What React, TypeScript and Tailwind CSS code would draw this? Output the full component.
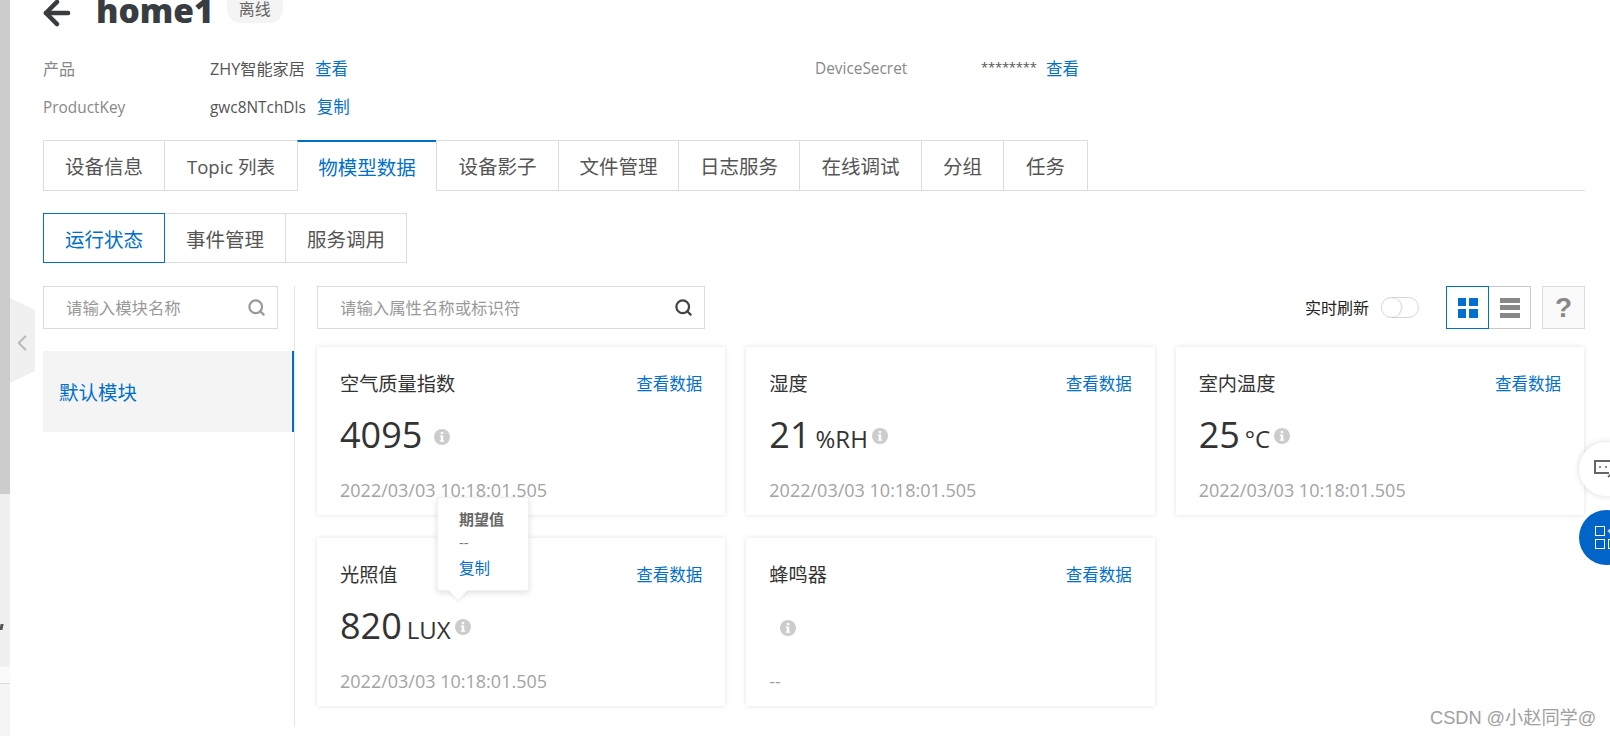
import { ArrowLeft, ChevronLeft, Search } from 'lucide-react';

const tabs = [
  { label: '设备信息', w: 'w-[121px]' },
  { label: 'Topic 列表', w: 'w-[133px]' },
  { label: '物模型数据', w: 'w-[139px]' },
  { label: '设备影子', w: 'w-[122px]' },
  { label: '文件管理', w: 'w-[120px]' },
  { label: '日志服务', w: 'w-[121px]' },
  { label: '在线调试', w: 'w-[122px]' },
  { label: '分组', w: 'w-[82px]' },
  { label: '任务', w: 'w-[85px]' },
];
const subTabs = ['运行状态', '事件管理', '服务调用'];
const stamp = '2022/03/03 10:18:01.505';

const cards = [
  { title: '空气质量指数', value: '4095', unit: '', time: stamp },
  { title: '湿度', value: '21', unit: '%RH', time: stamp },
  { title: '室内温度', value: '25', unit: '°C', time: stamp },
  { title: '光照值', value: '820', unit: 'LUX', time: stamp, tip: true },
  { title: '蜂鸣器', value: '', unit: '', time: '--' },
];

function InfoIcon({ className }: { className: string }) {
  return (
    <svg className={className} width="16" height="16" viewBox="0 0 16 16">
      <circle cx="8" cy="8" r="8" fill="#cccccc" />
      <rect x="6.8" y="3" width="2.4" height="2.2" fill="#fff" />
      <path d="M5.8 6.5h3.4v5h1v1.3H5.8v-1.3h1v-3.7h-1z" fill="#fff" />
    </svg>
  );
}

function Tooltip() {
  return (
    <div className="absolute left-[120px] top-[-41px] z-10 h-[94px] w-[92px] border border-[#f0f0f0] bg-white pl-[21px] pt-[10px] shadow-[0_2px_6px_rgba(0,0,0,0.12)]">
      <div className="text-[15px] leading-[23px] font-bold text-[#666]">期望值</div>
      <div className="text-[15px] leading-[23px] text-[#777]">--</div>
      <div className="pt-[1px] text-[15.5px] leading-[27px] text-[#0070cc]">复制</div>
      <div className="absolute left-[13px] top-[85px] size-[14px] rotate-45 bg-white shadow-[2px_2px_3px_rgba(0,0,0,0.06)]"></div>
    </div>
  );
}

function Card({ title, value, unit, time, tip }: { title: string; value: string; unit: string; time: string; tip?: boolean }) {
  return (
    <div className="relative flex h-[168px] flex-col bg-white pl-[23px] pr-[23px] pt-[22px] shadow-[0_0_5px_rgba(0,0,0,0.12)]">
      <div className="flex h-[28px] items-center justify-between pt-[2px]">
        <span className="text-[19.2px] text-[#333]">{title}</span>
        <a className="text-[16.5px] text-[#0070cc]" href="#">查看数据</a>
      </div>
      <div className="mt-[16px] flex h-[44px] items-center">
        {value && <span className="text-[36px] leading-none text-[#333]">{value}</span>}
        {unit && <span className="ml-[5px] mt-[8px] text-[24px] leading-none text-[#333]">{unit}</span>}
        <InfoIcon className={unit ? 'ml-[4px] mt-[2px]' : value ? 'ml-[12px] mt-[3px]' : 'ml-[11px] mt-[3px]'} />
      </div>
      <div className="mt-[21px] h-[24px] text-[18px] leading-[24px] text-[#a3a3a3]">{time}</div>
      {tip && <Tooltip />}
    </div>
  );
}

function SearchBox({ placeholder, className, iconColor }: { placeholder: string; className: string; iconColor: string }) {
  return (
    <div className={`flex h-[43px] items-center border border-[#dcdcdc] bg-white pl-[22px] pr-[11px] ${className}`}>
      <input className="w-0 flex-1 bg-transparent pt-[1px] text-[16.4px] outline-none placeholder:text-[#999]" placeholder={placeholder} />
      <Search size={19} strokeWidth={2.8} color={iconColor} />
    </div>
  );
}

export default function App() {
  return (
    <div className="relative flex h-[736px] w-[1610px] overflow-hidden bg-white font-['Open_Sans','Noto_Sans_CJK_SC',sans-serif]">
      <div className="flex w-[10px] shrink-0 flex-col">
        <div className="h-[494px] bg-[#cccccc]"></div>
        <div className="relative h-[173px] bg-[#f0f0f0]">
          <div className="absolute left-0 top-[130px] h-[6px] w-[3px] -skew-x-12 bg-[#555]"></div>
        </div>
        <div className="h-[17px] border-b border-[#dddddd] bg-[#fafafa]"></div>
        <div className="flex-1 bg-[#f5f5f5]"></div>
      </div>

      {/* collapse handle */}
      <div className="absolute left-[10px] top-[298px] flex h-[85px] w-[25px] items-center bg-[#f0f0f0] [clip-path:polygon(0_0,100%_14%,100%_86%,0_100%)]">
        <ChevronLeft size={26} strokeWidth={2} color="#bbbbbb" className="-ml-[1px] mt-[4px]" />
      </div>

      <div className="w-[1575px] pl-[33px]">
        <div className="-mt-[10px] flex h-[46px] items-center">
          <ArrowLeft size={38} strokeWidth={2.8} color="#373d41" className="-ml-[5px]" />
          <h1 className="ml-[20px] -mt-[4px] text-[33.5px] leading-none font-extrabold text-[#373d41]">home1</h1>
          <span className="ml-[13px] -mt-[14px] flex h-[34px] items-center rounded-[14px] bg-[#f4f4f4] px-[12px] pt-[5px] text-[16px] text-[#666]">离线</span>
        </div>

        <div className="mt-[14px] grid grid-cols-[772px_1fr] text-[15.4px]">
          <div className="flex h-[38px] items-center">
            <span className="w-[167px] text-[16px] text-[#888]">产品</span>
            <span className="text-[16.2px] text-[#555]">ZHY智能家居</span>
            <a className="ml-[10px] text-[16.5px] text-[#0070cc]" href="#">查看</a>
          </div>
          <div className="flex h-[38px] items-center">
            <span className="w-[166px] text-[#888]">DeviceSecret</span>
            <span className="-mt-[3px] w-[54px] text-[13px] tracking-[-0.2px] text-[#555]">********</span>
            <a className="ml-[11px] text-[16.5px] text-[#0070cc]" href="#">查看</a>
          </div>
          <div className="flex h-[38px] items-center pt-[1px]">
            <span className="w-[167px] text-[#888]">ProductKey</span>
            <span className="text-[#555]">gwc8NTchDls</span>
            <a className="ml-[11px] text-[16.5px] text-[#0070cc]" href="#">复制</a>
          </div>
        </div>

        <div className="mt-[14px] flex h-[51px] border-b border-[#dcdcdc]">
          {tabs.map((tab, i) => (
            <div
              key={tab.label}
              className={
                i === 2
                  ? `z-10 flex h-[51px] items-center justify-center border-t-2 border-l border-t-[#0070cc] border-l-[#dcdcdc] bg-white pt-[3px] text-[19.5px] text-[#0070cc] ${tab.w}`
                  : `flex h-[50px] items-center justify-center border-t border-l border-[#dcdcdc] pt-[3px] text-[#555] last:border-r ${i === 1 ? 'text-[18.5px]' : 'text-[19.5px]'} ${tab.w}`
              }
            >
              {tab.label}
            </div>
          ))}
        </div>

        <div className="mt-[22px] flex h-[50px]">
          {subTabs.map((tab, i) => (
            <div
              key={tab}
              className={
                i === 0
                  ? 'flex w-[122px] items-center justify-center border border-[#0070cc] pt-[3px] text-[19.5px] text-[#0070cc]'
                  : 'flex w-[121px] items-center justify-center border-y border-r border-[#dcdcdc] pt-[3px] text-[19.5px] text-[#555]'
              }
            >
              {tab}
            </div>
          ))}
        </div>

        <div className="mt-[23px] flex">
          <div className="h-[441px] w-[252px] shrink-0 border-r border-[#e5e5e5]">
            <SearchBox placeholder="请输入模块名称" className="w-[235px]" iconColor="#999999" />
            <div className="mt-[22px] flex h-[81px] items-center border-r-2 border-[#0070cc] bg-[#f4f4f4] pl-[16px] pt-[3px] text-[19.5px] text-[#0070cc]">
              默认模块
            </div>
          </div>

          <div className="flex-1 pl-[22px]">
            <div className="flex h-[43px] items-center justify-between">
              <SearchBox placeholder="请输入属性名称或标识符" className="w-[388px]" iconColor="#444444" />
              <div className="flex items-center">
                <span className="pt-[1px] text-[16px] text-[#222]">实时刷新</span>
                <div className="ml-[12px] flex h-[21px] w-[38px] items-center rounded-full border border-[#d5d5de] bg-white">
                  <div className="size-[19px] rounded-full bg-white shadow-[1px_0_2px_rgba(0,0,0,0.2)]"></div>
                </div>
                <div className="ml-[27px] flex h-[43px] w-[43px] items-center justify-center border border-[#0070cc]">
                  <div className="grid grid-cols-2 gap-[3px]">
                    <div className="size-[8.5px] bg-[#0070cc]"></div>
                    <div className="size-[8.5px] bg-[#0070cc]"></div>
                    <div className="size-[8.5px] bg-[#0070cc]"></div>
                    <div className="size-[8.5px] bg-[#0070cc]"></div>
                  </div>
                </div>
                <div className="flex h-[43px] w-[42px] flex-col items-center justify-center gap-[2.5px] border-y border-r border-[#c8c8c8]">
                  <div className="h-[5px] w-[20px] bg-[#888]"></div>
                  <div className="h-[5px] w-[20px] bg-[#888]"></div>
                  <div className="h-[5px] w-[20px] bg-[#888]"></div>
                </div>
                <div className="ml-[11px] flex h-[43px] w-[43px] items-center justify-center border border-[#dcdcdc] bg-[#fafafa] font-['Liberation_Sans',sans-serif] text-[28px] font-bold text-[#888]">
                  ?
                </div>
              </div>
            </div>

            <div className="mt-[18px] grid grid-cols-3 gap-x-[21px] gap-y-[23px] pr-[1px]">
              {cards.map((card) => (
                <Card key={card.title} {...card} />
              ))}
            </div>
          </div>
        </div>
      </div>

      {/* floating helpers, cut by the window edge */}
      <div className="absolute left-[1579px] top-[442px] flex size-[54px] items-center rounded-full bg-white pl-[14px] shadow-[0_0_6px_rgba(0,0,0,0.15)]">
        <svg className="shrink-0" width="24" height="20" viewBox="0 0 24 20" fill="none" stroke="#666666" strokeWidth="2">
          <path d="M16 14H2V2h18v10" />
          <path d="M15 18l7-6" />
          <circle cx="7" cy="8" r="1" fill="#666666" stroke="none" />
          <circle cx="13" cy="8" r="1" fill="#666666" stroke="none" />
        </svg>
      </div>
      <div className="absolute left-[1579px] top-[510px] grid size-[55px] grid-cols-[10px_10px] content-center gap-[3px] rounded-full bg-[#0064c8] pl-[16px]">
        <div className="size-[10px] border border-white"></div>
        <div className="ml-[1px] mt-[1px] size-[8px] rotate-45 bg-[#b8d6f5]"></div>
        <div className="size-[10px] border border-white"></div>
        <div className="size-[10px] border border-white"></div>
      </div>

      <div className="absolute left-[1430px] top-[705px] font-['Liberation_Sans','Noto_Sans_CJK_SC',sans-serif] text-[18.2px] leading-[26px] text-[#a0a0a0]">
        CSDN @小赵同学@
      </div>
    </div>
  );
}
